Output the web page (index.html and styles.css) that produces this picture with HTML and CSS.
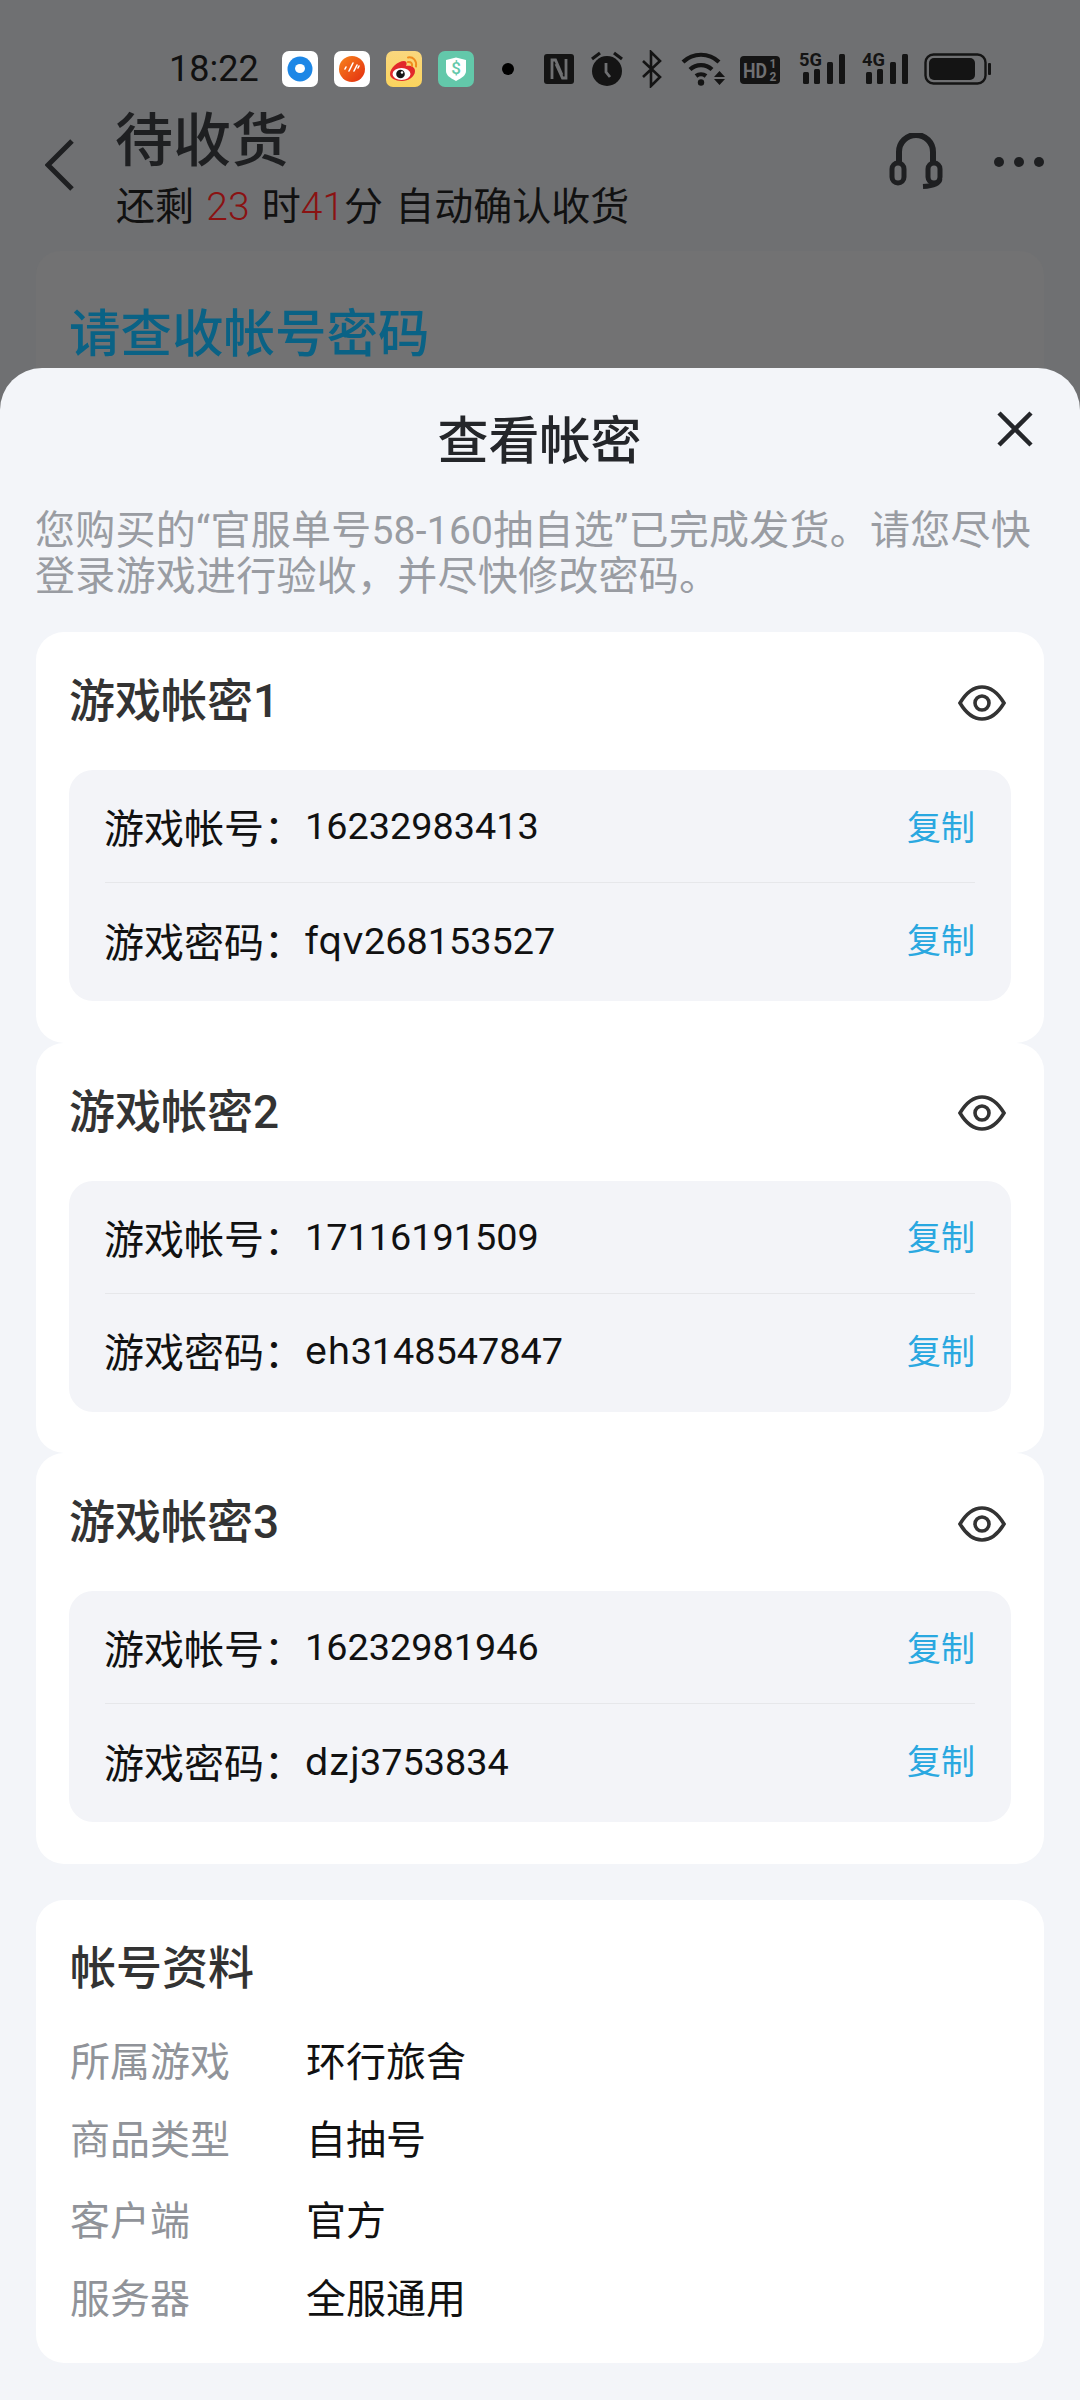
FILE: index.html
```html
<!DOCTYPE html>
<html lang="zh-CN">
<head>
<meta charset="utf-8">
<title>查看帐密</title>
<link rel="stylesheet" href="styles.css">
</head>
<body>
<div class="page">
  <div class="status">
    <span class="time">18:22</span>
    <div class="apps">
      <svg width="36" height="36" viewBox="0 0 36 36"><rect width="36" height="36" rx="7" fill="#fff"/><circle cx="18" cy="18" r="12.5" fill="#1d87e6"/><ellipse cx="18" cy="17.5" rx="5" ry="4.5" fill="#fff"/></svg>
      <svg width="36" height="36" viewBox="0 0 36 36"><defs><linearGradient id="og" x1="0" y1="0" x2="1" y2="1"><stop offset="0" stop-color="#f8841c"/><stop offset="1" stop-color="#e32c10"/></linearGradient></defs><rect width="36" height="36" rx="7" fill="#fff"/><circle cx="18" cy="18" r="13" fill="url(#og)"/><path d="M11 18l1-2M15 20l4-8M20 20l3-6M24 17l1-2" stroke="#fff" stroke-width="1.6" stroke-linecap="round" fill="none"/></svg>
      <svg width="36" height="36" viewBox="0 0 36 36"><defs><linearGradient id="wb" x1="0" y1="0" x2="0" y2="1"><stop offset="0" stop-color="#f9d77e"/><stop offset="1" stop-color="#fbd45e"/></linearGradient></defs><rect width="36" height="36" rx="7" fill="url(#wb)"/><path d="M4 23c0-6 8-13 14-13 3 0 3 3 2 5 5-1 9 1 9 5 0 6-7 10-13 10-7 0-12-3-12-7z" fill="#e2282b"/><ellipse cx="15.5" cy="23" rx="9" ry="6" fill="#fff"/><circle cx="14.500" cy="23" r="4.300" fill="#161616"/><circle cx="16" cy="21.500" r="1.200" fill="#fff"/><path d="M22 6.500c5-1 9 3 8 9M22 11c3-.5 4.500 1.500 4 4" stroke="#f08c1e" stroke-width="2" fill="none" stroke-linecap="round"/></svg>
      <svg width="36" height="36" viewBox="0 0 36 36"><rect width="36" height="36" rx="7" fill="#63c8aa"/><path d="M8 9l10-2.500L28 9v11c0 4-4 7-10 10-6-3-10-6-10-10z" fill="#fff"/><text x="18" y="23" class="shield-text">$</text></svg>
    </div>
    <span class="dot"></span>
    <div class="sys">
      <svg class="sys-nfc" width="30" height="38" viewBox="0 0 30 38"><rect y="4" width="30" height="30" rx="3" fill="#141414"/><path d="M8 29V10h3.500L18 25M22 9v19h-3.500L12 14" stroke="#6f7072" stroke-width="2.800" fill="none"/></svg>
      <svg class="sys-alarm" width="38" height="38" viewBox="0 0 38 38"><circle cx="19" cy="21" r="15" fill="#141414"/><path d="M4 9l8-6M34 9l-8-6" stroke="#141414" stroke-width="3.200"/><path d="M18 13v9l4 5" stroke="#6f7072" stroke-width="2.800" fill="none"/></svg>
      <svg class="sys-bt" width="21" height="38" viewBox="0 0 21 38"><path d="M2 11l17 16-9 9V2l9 9L2 27" stroke="#141414" stroke-width="2.600" fill="none"/></svg>
      <svg class="sys-wifi" width="45" height="38" viewBox="0 0 45 38"><path d="M2 12a26 26 0 0 1 36 0M9 19.500a16 16 0 0 1 22 0M15 26a8 8 0 0 1 10 0" stroke="#141414" stroke-width="4.200" fill="none"/><circle cx="20" cy="32.500" r="3.200" fill="#141414"/><path d="M33 27l5.500-6 5.500 6zM33 29h11l-5.500 6z" fill="#141414"/></svg>
      <svg class="sys-hd" width="40" height="38" viewBox="0 0 40 38"><rect y="6" width="40" height="28" rx="4" fill="#141414"/><text x="3" y="28" class="hd-text" textLength="24" lengthAdjust="spacingAndGlyphs">HD</text><text x="33" y="18" class="hd-frac">1</text><text x="33" y="31" class="hd-frac">2</text></svg>
      <svg class="sys-sig" width="46" height="44" viewBox="0 -6 46 44"><text x="0" y="16" class="sig-text" textLength="23" lengthAdjust="spacingAndGlyphs">5G</text><rect x="4" y="22" width="6" height="12" rx="1.500" fill="#141414"/><rect x="15" y="19" width="6" height="15" rx="1.500" fill="#141414"/><rect x="28" y="12" width="6" height="22" rx="1.500" fill="#141414"/><rect x="40" y="4" width="6" height="30" rx="1.500" fill="#141414"/></svg>
      <svg class="sys-sig sys-sig2" width="46" height="44" viewBox="0 -6 46 44"><text x="0" y="16" class="sig-text" textLength="23" lengthAdjust="spacingAndGlyphs">4G</text><rect x="4" y="22" width="6" height="12" rx="1.500" fill="#141414"/><rect x="15" y="19" width="6" height="15" rx="1.500" fill="#141414"/><rect x="28" y="12" width="6" height="22" rx="1.500" fill="#141414"/><rect x="40" y="4" width="6" height="30" rx="1.500" fill="#141414"/></svg>
      <svg class="sys-batt" width="67" height="38" viewBox="0 0 67 38"><rect x="1.500" y="4.500" width="60" height="29" rx="8" fill="none" stroke="#141414" stroke-width="2.400"/><rect x="5" y="8" width="46" height="22" rx="5" fill="#141414"/><rect x="64" y="13" width="3" height="12" rx="1" fill="#141414"/></svg>
    </div>
  </div>

  <header class="head">
    <svg class="back" width="30" height="54" viewBox="0 0 30 54"><path d="M27 3L3 27l24 24" stroke="#1e1f21" stroke-width="5" fill="none"/></svg>
    <div class="head-text">
      <div class="head-title">待收货</div>
      <div class="head-sub">还剩 <span class="red">23</span> 时<span class="red">41</span>分 自动确认收货</div>
    </div>
    <svg class="headset" width="56" height="56" viewBox="0 0 56 56"><path d="M11 32V19a17 17 0 0 1 34 0v13" stroke="#1e1f21" stroke-width="6" fill="none"/><rect x="4" y="30" width="12" height="20" rx="6" stroke="#1e1f21" stroke-width="5" fill="none"/><rect x="40" y="30" width="12" height="20" rx="6" stroke="#1e1f21" stroke-width="5" fill="none"/><path d="M52 46c-1 5-7 7-17 7.500" stroke="#1e1f21" stroke-width="5" fill="none"/></svg>
    <div class="more"><i></i><i></i><i></i></div>
  </header>

  <div class="behind">请查收帐号密码</div>

  <section class="sheet">
    <div class="sheet-head">
      <h1 class="sheet-title">查看帐密</h1>
      <svg class="close" width="36" height="36" viewBox="0 0 36 36"><path d="M2 2l32 32M34 2L2 34" stroke="#24262a" stroke-width="4.500"/></svg>
    </div>
    <p class="desc">您购买的“官服单号<span class="num-d">58-160</span>抽自选”已完成发货。请您尽快<br>登录游戏进行验收，并尽快修改密码。</p>

    <div class="accounts">
      <article class="card">
        <div class="card-head">
          <h2 class="card-title">游戏帐密1</h2>
          <svg class="eye" width="48" height="36" viewBox="0 0 48 36"><path d="M2 18C8 8 15 2 24 2s16 6 22 16c-6 10-13 16-22 16S8 28 2 18z" stroke="#333" stroke-width="3.600" fill="none"/><circle cx="24" cy="18" r="7" stroke="#333" stroke-width="3.600" fill="none"/></svg>
        </div>
        <div class="rows">
          <div class="row"><span class="label">游戏帐号：</span><span class="value">16232983413</span><span class="copy">复制</span></div>
          <div class="row"><span class="label">游戏密码：</span><span class="value"><span class="alpha">fqv</span>268153527</span><span class="copy">复制</span></div>
        </div>
      </article>
      <article class="card">
        <div class="card-head">
          <h2 class="card-title">游戏帐密2</h2>
          <svg class="eye" width="48" height="36" viewBox="0 0 48 36"><path d="M2 18C8 8 15 2 24 2s16 6 22 16c-6 10-13 16-22 16S8 28 2 18z" stroke="#333" stroke-width="3.600" fill="none"/><circle cx="24" cy="18" r="7" stroke="#333" stroke-width="3.600" fill="none"/></svg>
        </div>
        <div class="rows">
          <div class="row"><span class="label">游戏帐号：</span><span class="value">17116191509</span><span class="copy">复制</span></div>
          <div class="row"><span class="label">游戏密码：</span><span class="value"><span class="alpha">eh</span>3148547847</span><span class="copy">复制</span></div>
        </div>
      </article>
      <article class="card">
        <div class="card-head">
          <h2 class="card-title">游戏帐密3</h2>
          <svg class="eye" width="48" height="36" viewBox="0 0 48 36"><path d="M2 18C8 8 15 2 24 2s16 6 22 16c-6 10-13 16-22 16S8 28 2 18z" stroke="#333" stroke-width="3.600" fill="none"/><circle cx="24" cy="18" r="7" stroke="#333" stroke-width="3.600" fill="none"/></svg>
        </div>
        <div class="rows">
          <div class="row"><span class="label">游戏帐号：</span><span class="value">16232981946</span><span class="copy">复制</span></div>
          <div class="row"><span class="label">游戏密码：</span><span class="value"><span class="alpha">dzj</span>3753834</span><span class="copy">复制</span></div>
        </div>
      </article>
    </div>

    <article class="info">
      <h2 class="info-title">帐号资料</h2>
      <dl class="info-list">
        <div class="info-row"><dt>所属游戏</dt><dd>环行旅舍</dd></div>
        <div class="info-row"><dt>商品类型</dt><dd>自抽号</dd></div>
        <div class="info-row"><dt>客户端</dt><dd>官方</dd></div>
        <div class="info-row"><dt>服务器</dt><dd>全服通用</dd></div>
      </dl>
    </article>
  </section>
</div>
</body>
</html>
```
FILE: styles.css
```css
* { box-sizing: border-box; }
html, body { margin: 0; padding: 0; }
body {
  font-family: Roboto, "Noto Sans CJK SC", sans-serif;
  color: #111;
}
.page {
  position: relative;
  width: 1080px;
  height: 2400px;
  overflow: hidden;
  background: #6f7072;
}

/* status bar */
.status {
  display: flex;
  align-items: center;
  height: 38px;
  margin-top: 50px;
  padding-left: 169px;
  position: absolute;
  top: 0;
  left: 0;
}
.time { width: 88px; font-size: 36px; line-height: 38px; color: #111; }
.apps { display: flex; gap: 16px; margin-left: 25px; }
.apps svg, .sys svg { display: block; flex: none; }
.dot { width: 12px; height: 12px; margin-left: 28px; border-radius: 50%; background: #000; }
.sys { display: flex; margin-left: 30px; height: 38px; }
.sys-alarm { margin-left: 14px; }
.sys-bt { margin-left: 15px; }
.sys-wifi { margin-left: 19px; }
.sys-hd { margin-left: 14px; }
.sys-sig { margin-left: 19px; margin-top: -6px; }
.sys-sig2 { margin-left: 17px; }
.sys-batt { margin-left: 16px; }
.shield-text { font: 500 17px Roboto, sans-serif; fill: #63c8aa; text-anchor: middle; }
.hd-text { font: 700 21px Roboto, sans-serif; fill: #6f7072; }
.hd-frac { font: 700 12px Roboto, sans-serif; fill: #6f7072; text-anchor: middle; }
.sig-text { font: 700 19px Roboto, sans-serif; fill: #141414; }

/* header behind the sheet */
.head {
  display: flex;
  padding: 102px 0 0 45px;
  height: 251px;
}
.back { margin: 36px 40px 0 0; flex: none; }
.head-text { flex: 1; }
.head-title { margin-top: -4px; font-size: 58px; line-height: 76px; font-weight: 500; color: #1e1f21; font-family: "Noto Sans CJK SC", sans-serif; }
.head-sub { font-size: 39px; line-height: 50px; margin: 8px 0 0 1px; word-spacing: 2.6px; color: #111; }
.red { color: #8a1212; font-weight: 300; }
.headset { margin: 31px 0 0 0; flex: none; }
.more { display: flex; gap: 10px; margin: 55px 36px 0 50px; flex: none; height: 10px; }
.more i { width: 10px; height: 10px; border-radius: 50%; background: #1e1f21; }

.behind {
  margin: 0 36px;
  height: 140px;
  padding: 46px 33px 0;
  border-radius: 24px 24px 0 0;
  background: #727273;
  color: #0a6285;
  font-size: 51.5px;
  line-height: 66px;
  font-weight: 500;
  font-family: "Noto Sans CJK SC", sans-serif;
}

/* sheet */
.sheet {
  position: absolute;
  top: 368px;
  left: 0;
  right: 0;
  bottom: 0;
  padding: 0 36px;
  background: #f3f5f9;
  border-radius: 42px 42px 0 0;
}
.sheet-head {
  display: grid;
  grid-template-columns: 1fr auto 1fr;
  align-items: center;
  height: 140px;
  padding-bottom: 2px;
}
.sheet-title {
  grid-column: 2;
  margin: 0 0 0 -1px;
  font-size: 51px;
  line-height: 70px;
  font-weight: 500;
  color: #24262a;
  font-family: "Noto Sans CJK SC", sans-serif;
}
.close { grid-column: 3; justify-self: end; margin: -17px 11px 0 0; }
.desc {
  margin: 0 0 0 -1px;
  height: 124px;
  font-size: 40px;
  line-height: 46px;
  letter-spacing: 0.25px;
  color: #999ca2;
}
.num-d { font-size: 39px; }

/* cards */
.card {
  height: 410.5px;
  padding: 0 33px;
  background: #fff;
  border-radius: 28px;
}
.card-head {
  display: flex;
  align-items: center;
  justify-content: space-between;
  height: 138px;
  padding-right: 5px;
}
.card-title, .info-title {
  margin: 0;
  font-size: 46px;
  font-weight: 500;
  color: #333;
  font-family: Roboto, "Noto Sans CJK SC", sans-serif;
}
.card-title { line-height: 60px; }
.eye { display: block; flex: none; margin-top: 3px; }
.rows {
  height: 231px;
  padding: 0 36px;
  background: #f3f4f8;
  border-radius: 24px;
}
.row {
  display: flex;
  align-items: center;
  height: 112px;
  font-size: 40px;
  color: #111;
}
.row + .row { height: 114px; border-top: 1px solid #e6e7ea; }
.label { font-family: "Noto Sans CJK SC", sans-serif; width: 200px; flex: none; margin-left: -1px; margin-right: 1px; white-space: nowrap; }
.value { flex: 1; font-size: 37.8px; font-weight: 400; color: #111; }
.alpha { font-family: Inter, sans-serif; font-size: 38px; font-weight: 400; letter-spacing: 0.5px; }
.copy { font-size: 34px; color: #2aa8e0; margin-bottom: 2px; font-family: "Noto Sans CJK SC", sans-serif; }

/* info */
.info {
  margin-top: 36px;
  height: 463px;
  padding: 33px 34px 0;
  background: #fff;
  border-radius: 28px;
}
.info-title { line-height: 70px; }
.info-list { margin: 17px 0 0; }
.info-row {
  display: flex;
  align-items: center;
  height: 78.500px;
  font-size: 40px;
  font-family: "Noto Sans CJK SC", sans-serif;
}
.info-row:nth-child(3) { margin-top: 2px; }
.info-row dt { width: 236px; color: #909399; flex: none; }
.info-row dd { margin: 0; color: #111; }
```
